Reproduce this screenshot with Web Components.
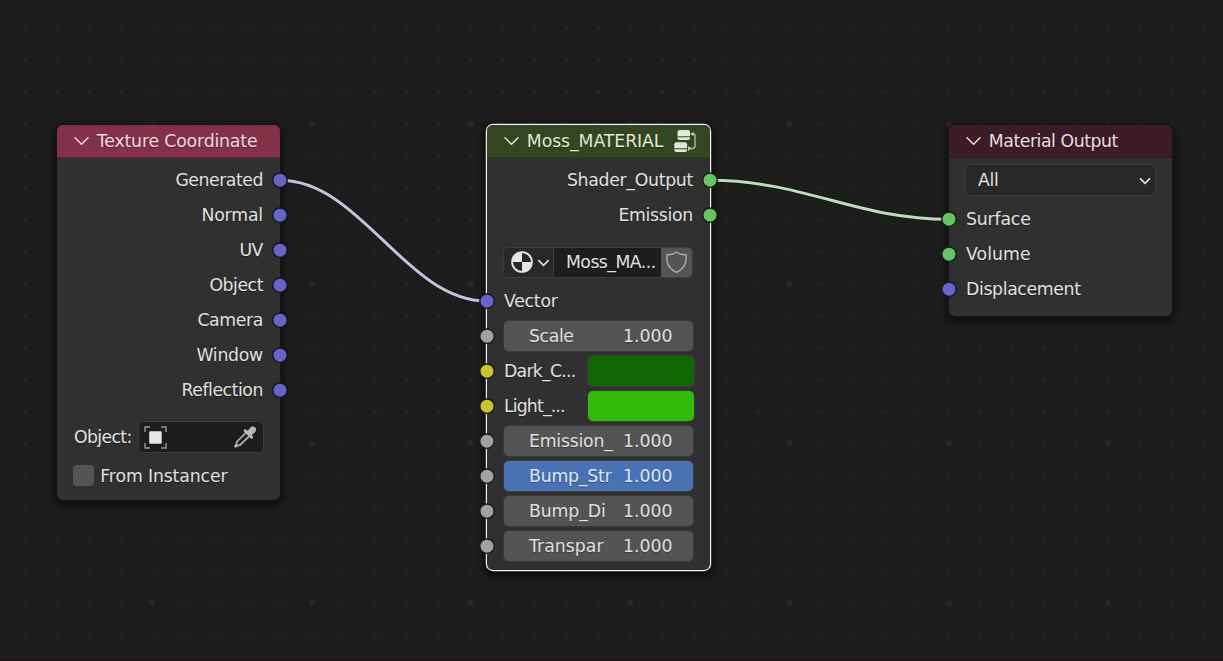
<!DOCTYPE html>
<html lang="en">
<head>
<meta charset="utf-8">
<title>Shader Editor</title>
<style>
  html, body { margin: 0; height: 100%; overflow: hidden; background: #1d1d1d; }
  body { font: 17.3px/35px "DejaVu Sans", sans-serif; color: #e0e0e0; }
</style>
</head>
<body>
<node-canvas>
  <shader-node style="left:57px;top:125px;height:374.5px;--head:#83314b;--title:#f3d9e2" heading="Texture Coordinate" tw="161">
    <socket-row side="out" label="Generated" tw="88"></socket-row>
    <socket-row side="out" label="Normal" tw="62"></socket-row>
    <socket-row side="out" label="UV" tw="24"></socket-row>
    <socket-row side="out" label="Object" tw="54"></socket-row>
    <socket-row side="out" label="Camera" tw="66"></socket-row>
    <socket-row side="out" label="Window" tw="67"></socket-row>
    <socket-row side="out" label="Reflection" tw="82"></socket-row>
    <object-picker label="Object:" tw="58"></object-picker>
    <check-row label="From Instancer" tw="127.5"></check-row>
  </shader-node>

  <shader-node selected style="left:487px;top:125px;height:445px;--head:#344621;--title:#e2e9da" heading="Moss_MATERIAL" tw="137">
    <group-icon slot="icon"></group-icon>
    <socket-row side="out" kind="shader" label="Shader_Output" tw="126.5"></socket-row>
    <socket-row side="out" kind="shader" label="Emission" tw="75"></socket-row>
    <material-picker label="Moss_MA..." tw="90"></material-picker>
    <socket-row label="Vector" tw="54"></socket-row>
    <socket-row kind="value"><value-slider label="Scale" tw="45"></value-slider></socket-row>
    <socket-row kind="color" label="Dark_C..." tw="72"><color-swatch style="--c:#0f6602"></color-swatch></socket-row>
    <socket-row kind="color" label="Light_..." tw="61"><color-swatch style="--c:#2fbb07"></color-swatch></socket-row>
    <socket-row kind="value"><value-slider label="Emission_" tw="84"></value-slider></socket-row>
    <socket-row kind="value"><value-slider label="Bump_Str" tw="83" full></value-slider></socket-row>
    <socket-row kind="value"><value-slider label="Bump_Di" tw="77"></value-slider></socket-row>
    <socket-row kind="value"><value-slider label="Transpar" tw="75"></value-slider></socket-row>
  </shader-node>

  <shader-node style="left:949px;top:125px;height:191px;--head:#3c1c26;--title:#ecdfe3" heading="Material Output" tw="129.5">
    <drop-down label="All" tw="21"></drop-down>
    <socket-row kind="shader" label="Surface" tw="65"></socket-row>
    <socket-row kind="shader" label="Volume" tw="65"></socket-row>
    <socket-row label="Displacement" tw="115"></socket-row>
  </shader-node>
</node-canvas>

<script>
const make = (name, html) => customElements.define(name, class extends HTMLElement {
  connectedCallback() {
    if (this.shadowRoot) return;
    this.attachShadow({ mode: 'open' }).innerHTML = html(this);
  }
});
/* A label on a fixed advance: the glyphs are set to fill the given width. */
customElements.define('fit-text', class extends HTMLElement {
  connectedCallback() {
    if (this.shadowRoot) return;
    const root = this.attachShadow({ mode: 'open' });
    root.innerHTML = '<style>:host{display:block;flex:none;white-space:nowrap;text-shadow:0 1px 1px #0005}span{display:inline-block}</style><span></span>';
    const s = root.querySelector('span'), t = this.getAttribute('text'), w = +this.getAttribute('w');
    s.textContent = t;
    if (w) {
      const gap = (w - .4 - s.getBoundingClientRect().width) / t.length;
      s.style.letterSpacing = gap.toFixed(3) + 'px';
    }
  }
});
const text = (el) => `<fit-text text="${el.getAttribute('label')}" w="${el.getAttribute('tw') || ''}"></fit-text>`;

make('node-canvas', () => {
  let dots = '';
  for (let r = 0; r < 20; r++) for (let c = 0; c < 38; c++) {
    const major = c % 5 === 4 && r % 5 === 3;
    const x = 25 + c * 31.86, y = 28.7 + r * 31.9, s = major ? 5 : 3;
    dots += `<rect x="${(x - s / 2).toFixed(1)}" y="${(y - s / 2).toFixed(1)}" width="${s}" height="${s}" fill="${major ? '#292929' : '#252525'}"/>`;
  }
  const a = 'M280 180.3C361 180.3 406 301 487 301', b = 'M710 180.3C803 180.3 856 219.3 949 219.3';
  return `<style>
    :host{display:block;position:relative;width:100%;height:661px;overflow:hidden;background:#1d1d1d}
    svg{position:absolute;inset:0}
  </style>
  <svg width="1223" height="661">${dots}
    <path d="M0 660.5H1223" stroke="#191416"/>
    <g fill="none" stroke-linecap="round">
      <path d="${a}${b}" stroke="#141414" stroke-width="4.6"/>
      <path d="${a}" stroke="#c6c2dc" stroke-width="3"/>
      <path d="${b}" stroke="#c0dbc0" stroke-width="3"/>
    </g>
  </svg><slot></slot>`;
});

make('shader-node', (el) => `<style>
  :host{display:flex;flex-direction:column;position:absolute;width:223px;border-radius:6px;background:#303030;
    box-shadow:0 0 0 1px #151515,0 3px 9px 2px #000a}
  :host([selected]){box-shadow:0 0 0 1.2px #f4f4f4,0 3px 9px 3px #000a}
  header{display:flex;align-items:center;flex:none;height:32.5px;padding-left:16.5px;box-sizing:border-box;background:var(--head);
    color:var(--title);border-radius:6px 6px 0 0;border-bottom:1px solid #0003;margin-bottom:5.5px}
  header svg{flex:none;margin-right:7.3px}
  header fit-text{margin-top:1px}
  main{display:flex;flex-direction:column}
</style>
<header><svg width="16" height="16" fill="none" stroke="currentColor" stroke-width="1.5" stroke-linecap="round" stroke-linejoin="round"><path d="M1 4.8 7.5 11.3 14 4.8"/></svg>
<fit-text text="${el.getAttribute('heading')}" w="${el.getAttribute('tw')}"></fit-text><slot name="icon"></slot></header>
<main><slot></slot></main>`);

make('socket-row', (el) => {
  const k = { shader: '#66c466', value: '#a1a1a1', color: '#c7c532' }[el.getAttribute('kind')] || '#6765c3';
  const line = { shader: '#0a250a', value: '#191919', color: '#1c1c06' }[el.getAttribute('kind')] || '#13132f';
  const out = el.getAttribute('side') === 'out';
  return `<style>
    :host{display:flex;position:relative;align-items:center;justify-content:${out ? 'flex-end' : 'space-between'};height:35px;padding:0 17px;box-sizing:border-box}
    svg{position:absolute;${out ? 'right' : 'left'}:-8px;top:9px}
  </style>${el.hasAttribute('label') ? text(el) : ''}<slot></slot>
  <svg width="16" height="17"><circle cx="8" cy="8.2" r="7.2" fill="${k}" stroke="${line}" stroke-width="1.4"/></svg>`;
});

make('value-slider', (el) => `<style>
  :host{display:flex;align-items:center;justify-content:space-between;width:189.5px;height:30px;padding:0 20.5px 0 25.5px;
    border-radius:5px;background:#545454;box-sizing:border-box;box-shadow:0 0 0 .5px #454545;margin:0 -.5px}
  :host([full]){background:#4772b3;color:#e0e8f4}
</style>${text(el)}<fit-text text="1.000" w="50"></fit-text>`);

make('color-swatch', () => `<style>:host{display:block;width:105.5px;height:30px;border-radius:5px;background:var(--c);margin-right:-.5px;box-shadow:0 0 0 .5px #444}</style>`);

make('group-icon', () => `<style>:host{display:block;margin-left:9.5px;height:24px}</style>
<svg width="26" height="24" style="display:block" fill="currentColor"><rect x="4.5" y="1" width="12.5" height="10" rx="2"/><rect x="1.3" y="13.3" width="12.8" height="9.7" rx="2"/>
<path d="M4.5 7.8h12.5M1.3 19.8h12.8" stroke="var(--head)" stroke-width="1"/>
<path d="M17 5l3.5-2V7zM15 17l3.5 2.5-3.5 2.5z" opacity=".8"/><path d="M20 5h.5q1.5 0 1.5 1.5v10q0 3-2.500 3h-2" fill="none" stroke="currentColor" stroke-width="1.3" opacity=".75"/></svg>`);

make('material-picker', (el) => `<style>
  :host{display:flex;height:31px;margin:13.5px 17px 6.3px 16px;border-radius:5px;overflow:hidden;border:1px solid #3d3d3d;box-sizing:border-box;line-height:29px}
  .menu{display:flex;align-items:center;width:49px;background:#282828;border-right:1px solid #3d3d3d}
  .name{flex:1;background:#1d1d1d;padding-left:12px}
  .user{display:flex;align-items:center;justify-content:center;width:31px;background:#545454}
</style>
<div class="menu"><svg width="49" height="29" fill="none"><circle cx="18" cy="14" r="10.8" fill="#e6e6e6"/><path d="M18 14V5A9 9 0 0 1 27 14zM18 14v9A9 9 0 0 1 9 14z" fill="#282828"/><path d="m34.8 12.7 4.7 4.6 4.7-4.6" stroke="#e0e0e0" stroke-width="1.7" stroke-linecap="round"/></svg></div>
<div class="name">${text(el)}</div>
<div class="user"><svg width="24" height="26" fill="none" stroke="#a3a3a3" stroke-width="1.6" stroke-linejoin="round"><path d="M11.500 3Q8 6.300 2 5.500V12Q3.500 19.700 11.500 23.300 19.500 19.700 21 12V5.500Q15 6.300 11.500 3z"/></svg></div>`);

make('drop-down', (el) => `<style>
  :host{display:flex;align-items:center;justify-content:space-between;height:32px;margin:1px 16px 6px;padding:0 4px 0 12px;box-sizing:border-box;
    background:#282828;border:1px solid #3d3d3d;border-radius:5px}
</style>${text(el)}<svg width="12" height="12" fill="none" stroke="#e3e3e3" stroke-width="1.7" stroke-linecap="round"><path d="m1.5 4.9 4.5 4.5 4.5-4.5"/></svg>`);

make('object-picker', (el) => `<style>
  :host{display:flex;align-items:center;justify-content:space-between;height:32px;margin:13px 16px 0 17px}
  .field{display:flex;align-items:center;justify-content:space-between;width:126px;height:32px;padding:0 6px 0 5px;box-sizing:border-box;background:#1d1d1d;border:1px solid #3d3d3d;border-radius:5px}
</style>${text(el)}<div class="field">
<svg width="23" height="23" fill="none"><path d="M1 6V1h5M17 1H22v5M22 17V22h-5M6 22H1v-5" stroke="#999" stroke-width="1.4"/><rect x="5.2" y="5.3" width="12.5" height="12.5" rx="1" fill="#e6e6e6"/></svg>
<svg width="24" height="24" fill="none"><path d="M12.8 7.8 4 16.6 2.8 21.2 7 20 16.2 11.2" stroke="#a6a6a6" stroke-width="1.9" stroke-linejoin="round"/><path d="M1.8 22.2l2.5-2.5" stroke="#bbb" stroke-width="2.5"/><path d="M10.8 5.2q1-1.5 2.5-.4l1.5.9 2.4-3q2-2.2 5-.5 2 2.7-.4 5.2l-3 2.5.8 1.2q1.3 1.6-.2 2.5l-1.3.2-7.2-7.2z" fill="#b8b8b8"/></svg>
</div>`);

make('check-row', (el) => `<style>
  :host{display:flex;align-items:center;height:35px;margin:5px 16px 0}
  b{flex:none;width:21px;height:21px;border-radius:4px;background:#545454;margin:0 6px 0 .3px}
  fit-text{margin-top:1px}
</style><b></b>${text(el)}`);
</script>
</body>
</html>
